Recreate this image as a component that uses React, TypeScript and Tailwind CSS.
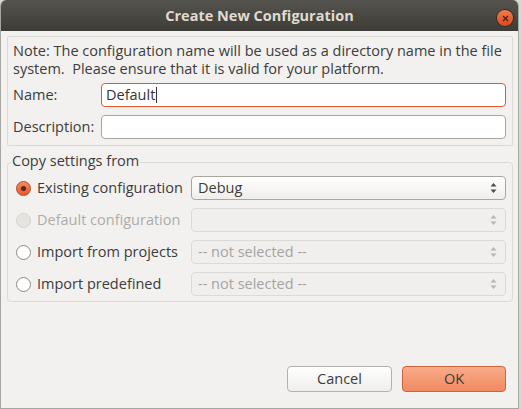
const font = { fontFamily: '"Open Sans", "Noto Sans", sans-serif' };

function Radio({ checked, disabled }: { checked?: boolean; disabled?: boolean }) {
  if (checked)
    return (
      <span className="flex h-[15px] w-[15px] items-center justify-center rounded-full border border-[#c1461e] bg-gradient-to-b from-[#f58a5f] to-[#e15a2c]">
        <span className="h-[5px] w-[5px] rounded-full bg-[#5a2a18]" />
      </span>
    );
  return (
    <span
      className={`h-[15px] w-[15px] rounded-full border ${
        disabled ? "border-[#d6d4d0] bg-[#e6e4e1]" : "border-[#8f8b85] bg-white"
      }`}
    />
  );
}

function Arrows({ dim }: { dim?: boolean }) {
  const c = dim ? "#b9b7b3" : "#4c4c4c";
  return (
    <svg width="7" height="12" viewBox="0 0 7 12">
      <path d="M3.5 1 L6.5 4.5 L0.5 4.5 Z" fill={c} />
      <path d="M3.5 11 L6.5 7.5 L0.5 7.5 Z" fill={c} />
    </svg>
  );
}

function Combo({ value, active }: { value?: string; active?: boolean }) {
  return (
    <div
      className={`flex h-[24px] items-center justify-between rounded-[4px] border pl-[6px] pr-[8px] ${
        active
          ? "border-[#a9a6a0] bg-gradient-to-b from-white to-[#efeeec] text-[#3c3c3c]"
          : "border-[#dcdad6] bg-[#f0efed] text-[#a6a4a0]"
      }`}
    >
      <span>{value ?? ""}</span>
      <Arrows dim={!active} />
    </div>
  );
}

const rows: { label: string; value?: string; checked?: boolean; disabled?: boolean }[] = [
  { label: "Existing configuration", value: "Debug", checked: true },
  { label: "Default configuration", disabled: true },
  { label: "Import from projects", value: "-- not selected --" },
  { label: "Import predefined", value: "-- not selected --" },
];

export default function App() {
  return (
    <div className="h-[409px] w-[521px] bg-[#d9d8d5]" style={font}>
      <div className="flex h-[409px] w-[519px] flex-col overflow-hidden rounded-t-[6px] border-x border-b border-[#a7a6a2] bg-[#f2f1f0] text-[14.5px] leading-[18px]">
        <div className="relative flex h-[31px] shrink-0 items-center justify-center bg-gradient-to-b from-[#56544e] to-[#3d3c37]">
          <span className="text-[14.5px] font-bold text-[#dfdbd2]">Create New Configuration</span>
          <span className="absolute right-[5px] top-[10px] flex h-[16px] w-[16px] items-center justify-center rounded-full bg-gradient-to-b from-[#f57b4c] to-[#d9481c] shadow-[0_0_0_1px_#3a2a22]">
            <svg width="7" height="7" viewBox="0 0 7 7">
              <path d="M1 1 L6 6 M6 1 L1 6" stroke="#4a2216" strokeWidth="1.4" />
            </svg>
          </span>
        </div>

        <div className="ml-[6px] mr-[5px] mt-[5px] rounded-[2px] border border-[#dcdad5] pb-[6px] pl-[5px] pr-[6px] pt-[5px] text-[#3c3c3c]">
          <p>
            Note: The configuration name will be used as a directory name in the file system.&nbsp; Please ensure that it is valid for your platform.
          </p>
          <div className="mt-[5px] grid grid-cols-[88px_1fr] items-center gap-y-[8px]">
            <span>Name:</span>
            <div className="flex h-[24px] items-center rounded-[4px] border border-[#e4572b] bg-white px-[4px] text-[#333]">
              Default<span className="ml-[1px] h-[16px] w-px bg-[#333]" />
            </div>
            <span>Description:</span>
            <div className="h-[24px] rounded-[4px] border border-[#a9a6a0] bg-white" />
          </div>
        </div>

        <div className="relative ml-[6px] mr-[5px] mt-[16px] rounded-[4px] border border-[#dcdad5] pb-[5px] pl-[8px] pr-[6px] pt-[13px]">
          <span className="absolute -top-[11px] left-[3px] bg-[#f2f1f0] px-[1px] text-[#3c3c3c]">Copy settings from</span>
          <div className="flex flex-col gap-[8px]">
            {rows.map((r) => (
              <div key={r.label} className="grid grid-cols-[175px_1fr] items-center">
                <div className="flex items-center gap-[6px]">
                  <Radio checked={r.checked} disabled={r.disabled} />
                  <span className={r.disabled ? "text-[#aeaca8]" : "text-[#3c3c3c]"}>{r.label}</span>
                </div>
                <Combo value={r.value} active={r.checked} />
              </div>
            ))}
          </div>
        </div>

        <div className="mt-auto flex justify-end gap-[10px] pb-[16px] pr-[12px]">
          <button className="h-[26px] w-[105px] rounded-[4px] border border-[#b4b1ab] bg-gradient-to-b from-white to-[#efeeec] text-[#3c3c3c]">
            Cancel
          </button>
          <button className="h-[26px] w-[104px] rounded-[4px] border border-[#c9643c] bg-gradient-to-b from-[#f9ab8a] to-[#f08a60] text-[#3c3c3c]">
            OK
          </button>
        </div>
      </div>
    </div>
  );
}
